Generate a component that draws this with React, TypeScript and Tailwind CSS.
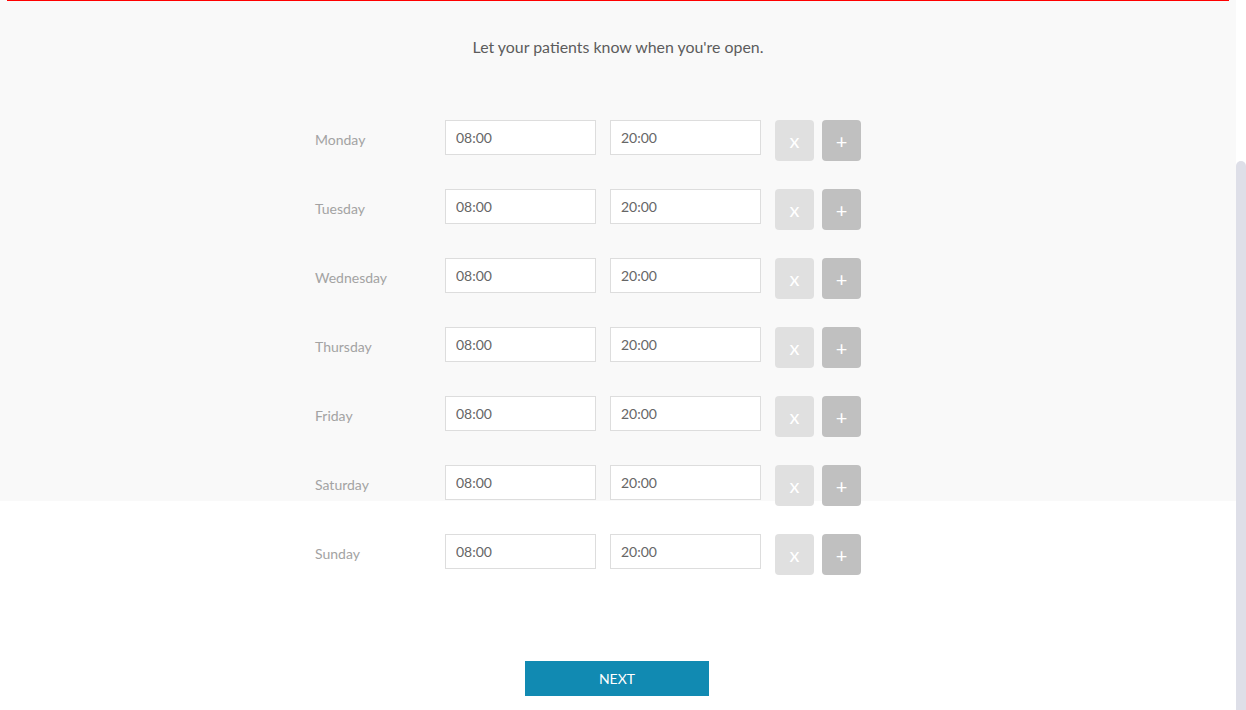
import React from "react";

const days = ["Monday", "Tuesday", "Wednesday", "Thursday", "Friday", "Saturday", "Sunday"];

export default function App() {
  return (
    <div
      className="flex w-[1246px] h-[710px] overflow-hidden bg-white"
      style={{ fontFamily: "Lato, 'Open Sans', sans-serif" }}
    >
      <div className="w-[1236px] h-[710px] bg-[linear-gradient(#f9f9f9_501px,#ffffff_501px)] flex flex-col">
        <div className="mx-[7px] h-px bg-[#ff0000]" />
        <p className="pt-[35px] text-center text-[15.9px] leading-[22px] text-[#5c5c5c]">
          Let your patients know when you're open.
        </p>
        <div className="w-[606px] mx-auto mt-[62px] flex flex-col gap-[28px]">
          {days.map((d) => (
            <div key={d} className="flex items-start">
              <div className="w-[130px] mt-[10px] text-[14px] leading-[20px] text-[#a3a3a3]">{d}</div>
              <input
                readOnly
                value="08:00"
                className="w-[151px] h-[35px] border border-[#dddddd] bg-white px-[10px] text-[14px] text-[#666666] outline-none"
              />
              <input
                readOnly
                value="20:00"
                className="ml-[14px] w-[151px] h-[35px] border border-[#dddddd] bg-white px-[10px] text-[14px] text-[#666666] outline-none"
              />
              <button className="ml-[14px] w-[39px] h-[41px] rounded-[4px] bg-[#e0e0e0] text-white text-[20px] leading-none flex items-center justify-center pb-[2px]">
                x
              </button>
              <button className="ml-[8px] w-[39px] h-[41px] rounded-[4px] bg-[#c0c0c0] text-white text-[20px] leading-none flex items-center justify-center">
                +
              </button>
            </div>
          ))}
        </div>
        <div className="mt-[86px] flex justify-center pr-[2px]">
          <button className="w-[184px] h-[35px] bg-[#118ab2] text-white text-[14px] uppercase">Next</button>
        </div>
      </div>
      <div className="w-[10px] flex flex-col">
        <div className="h-[161px]" />
        <div className="flex-1 bg-[#dedfe8] rounded-t-[5px]" />
      </div>
    </div>
  );
}
